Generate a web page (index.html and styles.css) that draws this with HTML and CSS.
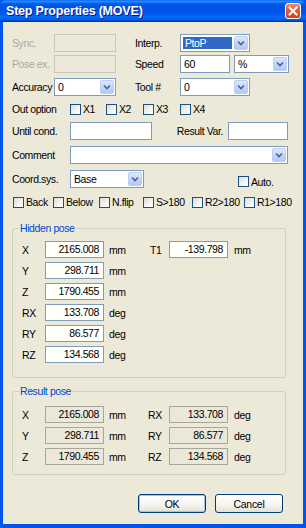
FILE: index.html
```
<!DOCTYPE html>
<html lang="en">
<head>
    <meta charset="UTF-8">
    <title>Step Properties (MOVE)</title>
    <link rel="stylesheet" href="styles.css">
</head>
<body>
<div class="window">
    <div class="titlebar">
        <span class="title">Step Properties (MOVE)</span>
        <span class="close-btn">
            <svg width="10" height="10" viewBox="0 0 10 10"><path d="M1.5 1.5 L8.5 8.5 M8.5 1.5 L1.5 8.5" stroke="#fff" stroke-width="2" stroke-linecap="square"/></svg>
        </span>
    </div>
    <div class="client">
        <div class="row r1">
            <span class="lbl w42 disabled">Sync.</span>
            <div class="tb w62 tb-disabled"></div>
            <span class="lbl lbl2">Interp.</span>
            <div class="combo w70"><span class="val selected">PtoP</span><span class="drop"><svg width="8" height="6" viewBox="0 0 8 6"><path d="M1 1.5 L4 4.5 L7 1.5" fill="none" stroke="#4d6185" stroke-width="1.6"/></svg></span></div>
        </div>
        <div class="row r2">
            <span class="lbl w42 disabled">Pose ex.</span>
            <div class="tb w62 tb-disabled"></div>
            <span class="lbl lbl2">Speed</span>
            <div class="tb w50">60</div>
            <div class="combo w55 ml4"><span class="val">%</span><span class="drop"><svg width="8" height="6" viewBox="0 0 8 6"><path d="M1 1.5 L4 4.5 L7 1.5" fill="none" stroke="#4d6185" stroke-width="1.6"/></svg></span></div>
        </div>
        <div class="row r3">
            <span class="lbl w42">Accuracy</span>
            <div class="combo w62"><span class="val">0</span><span class="drop"><svg width="8" height="6" viewBox="0 0 8 6"><path d="M1 1.5 L4 4.5 L7 1.5" fill="none" stroke="#4d6185" stroke-width="1.6"/></svg></span></div>
            <span class="lbl lbl2">Tool #</span>
            <div class="combo w70"><span class="val">0</span><span class="drop"><svg width="8" height="6" viewBox="0 0 8 6"><path d="M1 1.5 L4 4.5 L7 1.5" fill="none" stroke="#4d6185" stroke-width="1.6"/></svg></span></div>
        </div>
        <div class="row r4">
            <span class="lbl w58">Out option</span>
            <span class="chk w36"><span class="box"></span>X1</span>
            <span class="chk w37"><span class="box"></span>X2</span>
            <span class="chk w37"><span class="box"></span>X3</span>
            <span class="chk"><span class="box"></span>X4</span>
        </div>
        <div class="row r5">
            <span class="lbl w58">Until cond.</span>
            <div class="tb w82"></div>
            <span class="lbl lbl-right">Result Var.</span>
            <div class="tb w60"></div>
        </div>
        <div class="row r6">
            <span class="lbl w58">Comment</span>
            <div class="combo w218"><span class="val"></span><span class="drop"><svg width="8" height="6" viewBox="0 0 8 6"><path d="M1 1.5 L4 4.5 L7 1.5" fill="none" stroke="#4d6185" stroke-width="1.6"/></svg></span></div>
        </div>
        <div class="row r7">
            <span class="lbl w58">Coord.sys.</span>
            <div class="combo w74"><span class="val">Base</span><span class="drop"><svg width="8" height="6" viewBox="0 0 8 6"><path d="M1 1.5 L4 4.5 L7 1.5" fill="none" stroke="#4d6185" stroke-width="1.6"/></svg></span></div>
            <span class="chk auto"><span class="box"></span>Auto.</span>
        </div>
        <div class="row r8">
            <span class="chk c-back"><span class="box"></span>Back</span>
            <span class="chk c-below"><span class="box"></span>Below</span>
            <span class="chk c-nflip"><span class="box"></span>N.flip</span>
            <span class="chk c-s"><span class="box"></span>S&gt;180</span>
            <span class="chk c-r2"><span class="box"></span>R2&gt;180</span>
            <span class="chk"><span class="box"></span>R1&gt;180</span>
        </div>

        <fieldset class="group hidden-pose">
            <legend>Hidden pose</legend>
            <div class="prow">
                <span class="plbl">X</span><div class="num">2165.008</div><span class="unit">mm</span>
                <span class="plbl2 t1">T1</span><div class="num">-139.798</div><span class="unit2">mm</span>
            </div>
            <div class="prow"><span class="plbl">Y</span><div class="num">298.711</div><span class="unit">mm</span></div>
            <div class="prow"><span class="plbl">Z</span><div class="num">1790.455</div><span class="unit">mm</span></div>
            <div class="prow"><span class="plbl">RX</span><div class="num">133.708</div><span class="unit">deg</span></div>
            <div class="prow"><span class="plbl">RY</span><div class="num">86.577</div><span class="unit">deg</span></div>
            <div class="prow"><span class="plbl">RZ</span><div class="num">134.568</div><span class="unit">deg</span></div>
        </fieldset>

        <fieldset class="group result-pose">
            <legend>Result pose</legend>
            <div class="prow">
                <span class="plbl">X</span><div class="num ro">2165.008</div><span class="unit u-short">mm</span>
                <span class="plbl2">RX</span><div class="num ro">133.708</div><span class="unit2">deg</span>
            </div>
            <div class="prow">
                <span class="plbl">Y</span><div class="num ro">298.711</div><span class="unit u-short">mm</span>
                <span class="plbl2">RY</span><div class="num ro">86.577</div><span class="unit2">deg</span>
            </div>
            <div class="prow">
                <span class="plbl">Z</span><div class="num ro">1790.455</div><span class="unit u-short">mm</span>
                <span class="plbl2">RZ</span><div class="num ro">134.568</div><span class="unit2">deg</span>
            </div>
        </fieldset>

        <div class="buttons">
            <button class="xp-btn default">OK</button>
            <button class="xp-btn">Cancel</button>
        </div>
    </div>
</div>
</body>
</html>
```
FILE: styles.css
```
* {
    box-sizing: border-box;
}
body {
    margin: 0;
    font-family: "Liberation Sans", Arial, sans-serif;
    font-size: 10.5px;
    letter-spacing: -0.4px;
    color: #000;
    background: #0054e3;
}
.window {
    width: 306px;
    height: 528px;
    display: flex;
    flex-direction: column;
    background: #0055ea;
}
.titlebar {
    height: 22px;
    flex: none;
    display: flex;
    align-items: center;
    justify-content: space-between;
    padding: 0 5px 0 6px;
    background: linear-gradient(to bottom, #0058ee 0%, #3593ff 5%, #127dff 10%, #0262ee 16%, #0057e5 22%, #0054e3 30%, #0055eb 56%, #005bf5 66%, #026afe 76%, #0062ef 86%, #0052d6 92%, #0040ab 96%, #003092 100%);
    border-radius: 6px 6px 0 0;
}
.title {
    color: #fff;
    font-weight: bold;
    font-size: 12.5px;
    letter-spacing: -0.2px;
    text-shadow: 1px 1px 0 #0a1883;
}
.close-btn {
    width: 16px;
    height: 16px;
    display: flex;
    align-items: center;
    justify-content: center;
    border: 1px solid #fff;
    border-radius: 3px;
    background: linear-gradient(to bottom, #f08c6c 0%, #e45d38 40%, #d2411c 100%);
}
.client {
    flex: 1;
    margin: 0 3px 4px 3px;
    background: #ece9d8;
    padding: 12px 0 0 9px;
}
.row {
    display: flex;
    align-items: center;
    height: 18px;
}
.r2 { margin-top: 3px; }
.r3 { margin-top: 5px; }
.r4 { margin-top: 4px; }
.r5 { margin-top: 4px; }
.r6 { margin-top: 6px; }
.r7 { margin-top: 6px; }
.r8 { margin-top: 5px; }

.lbl {
    flex: none;
    white-space: nowrap;
}
.disabled {
    color: #aca899;
}
.w42 { width: 42px; }
.w58 { width: 58px; }
.w36 { width: 36px; }
.w37 { width: 37px; }
.w50 { width: 50px; }
.w55 { width: 55px; }
.w60 { width: 60px; }
.w62 { width: 62px; }
.w70 { width: 70px; }
.w74 { width: 74px; }
.w82 { width: 82px; }
.w218 { width: 218px; }
.ml4 { margin-left: 4px; }
.lbl2 {
    margin-left: 19px;
    width: 45px;
}
.lbl-right {
    width: 76px;
    text-align: right;
    padding-right: 5px;
}

.tb {
    flex: none;
    height: 18px;
    border: 1px solid #7f9db9;
    background: #fff;
    padding: 2px 3px 0 3px;
    line-height: 13px;
}
.tb-disabled {
    border-color: #c9c7ba;
    background: #ece9d8;
}

.combo {
    flex: none;
    height: 18px;
    display: flex;
    border: 1px solid #7f9db9;
    background: #fff;
    padding: 1px;
}
.combo .val {
    flex: 1;
    padding: 1px 2px 0 2px;
    line-height: 13px;
}
.combo .val.selected {
    background: #316ac5;
    color: #fff;
    margin: 1px 2px 1px 1px;
    padding-top: 0;
}
.combo .drop {
    width: 14px;
    flex: none;
    display: flex;
    align-items: center;
    justify-content: center;
    background: linear-gradient(to bottom, #dde8fe 0%, #c4d6fb 50%, #b4c8f6 100%);
    border: 1px solid #bacdf5;
    border-radius: 2px;
}

.chk {
    display: flex;
    align-items: center;
    flex: none;
    white-space: nowrap;
}
.chk .box {
    width: 11px;
    height: 11px;
    margin-right: 2px;
    border: 1px solid #1c5180;
    background: linear-gradient(135deg, #dcdcd7 0%, #f4f4f0 60%, #fff 100%);
}
.auto {
    margin-left: 94px;
    margin-top: 5px;
}
.r8 .chk:first-child { margin-left: 1px; }
.c-back { width: 40px; }
.c-below { width: 46px; }
.c-nflip { width: 44px; }
.c-s { width: 49px; }
.c-r2 { width: 52px; }

.group {
    width: 274px;
    margin: 0;
    border: 1px solid #d0d0bf;
    border-radius: 3px;
}
.group legend {
    color: #0046d5;
    padding: 0 1px;
    margin-left: -3px;
    line-height: 13px;
}
.hidden-pose {
    margin-top: 11px;
    padding: 6px 0 14px 9px;
}
.result-pose {
    margin-top: 7px;
    padding: 8px 0 9px 9px;
}
.prow {
    display: flex;
    align-items: center;
    height: 17px;
}
.prow + .prow {
    margin-top: 4px;
}
.plbl {
    width: 23px;
    flex: none;
}
.num {
    width: 59px;
    height: 17px;
    flex: none;
    border: 1px solid #7f9db9;
    background: #fffffb;
    text-align: right;
    padding: 1px 4px 0 0;
    line-height: 13px;
}
.num.ro {
    border-color: #a6a69a;
    background: #ebe8da;
}
.unit {
    width: 41px;
    margin-left: 5px;
    flex: none;
}
.u-short {
    width: 39px;
}
.plbl2 {
    width: 21px;
    flex: none;
}
.plbl2.t1 {
    width: 19px;
}
.unit2 {
    margin-left: 6px;
}

.buttons {
    display: flex;
    margin: 19px 0 0 126px;
    gap: 9px;
}
.xp-btn {
    width: 68px;
    height: 19px;
    padding: 0;
    font-family: "Liberation Sans", Arial, sans-serif;
    font-size: 10.5px;
    letter-spacing: -0.3px;
    color: #000;
    border: 1px solid #003c74;
    border-radius: 3px;
    background: linear-gradient(to bottom, #fff 0%, #f4f3ee 60%, #e3e1d6 100%);
}
.xp-btn.default {
    box-shadow: inset 0 0 0 1px #a3c1f1;
}
```
